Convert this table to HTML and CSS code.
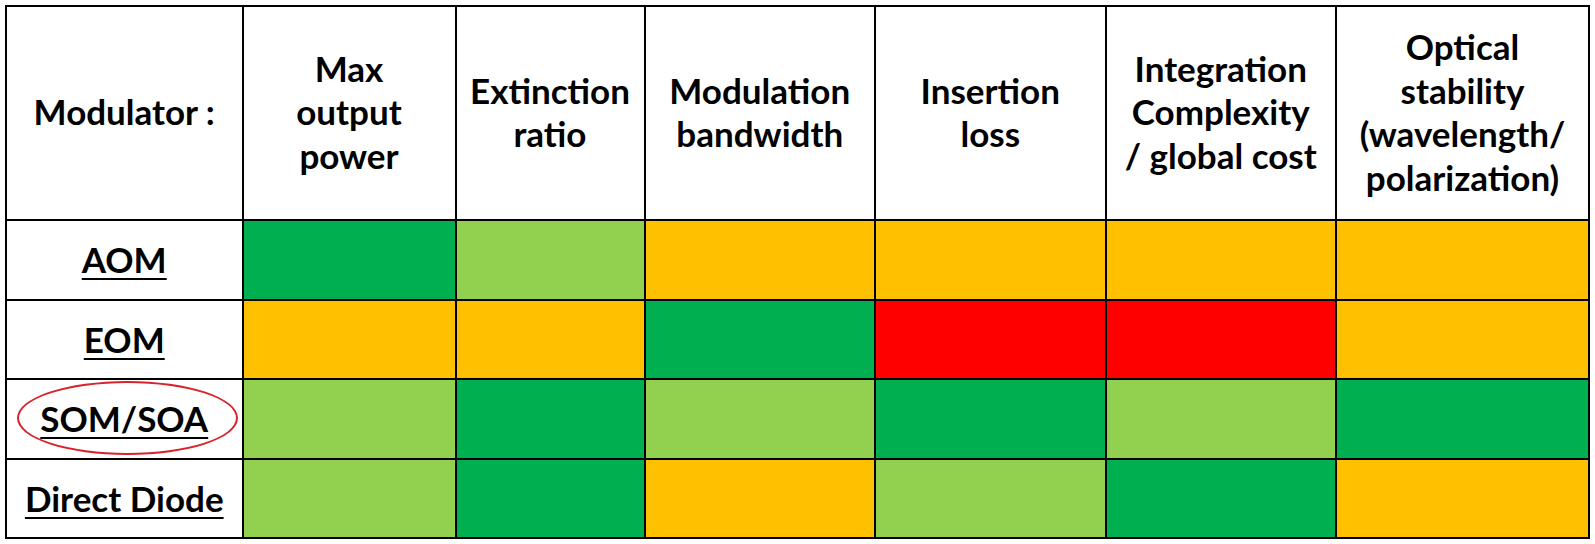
FILE: index.html
```html
<!DOCTYPE html>
<html lang="en">
<head>
<meta charset="utf-8">
<title>Modulator comparison</title>
<link rel="stylesheet" href="styles.css">
</head>
<body>
<div class="table">
  <div class="cell head first">Modulator :</div>
  <div class="cell head">Max<br>output<br>power</div>
  <div class="cell head">Extinction<br>ratio</div>
  <div class="cell head">Modulation<br>bandwidth</div>
  <div class="cell head">Insertion<br>loss</div>
  <div class="cell head">Integration<br>Complexity<br>/ global cost</div>
  <div class="cell head">Optical<br>stability<br>(wavelength/<br>polarization)</div>

  <div class="cell label"><span class="u">AOM</span></div>
  <div class="cell dg"></div>
  <div class="cell lg"></div>
  <div class="cell or"></div>
  <div class="cell or"></div>
  <div class="cell or"></div>
  <div class="cell or"></div>

  <div class="cell label"><span class="u">EOM</span></div>
  <div class="cell or"></div>
  <div class="cell or"></div>
  <div class="cell dg"></div>
  <div class="cell rd"></div>
  <div class="cell rd"></div>
  <div class="cell or"></div>

  <div class="cell label circled"><span class="u">SOM/SOA</span><span class="ring"></span></div>
  <div class="cell lg"></div>
  <div class="cell dg"></div>
  <div class="cell lg"></div>
  <div class="cell dg"></div>
  <div class="cell lg"></div>
  <div class="cell dg"></div>

  <div class="cell label"><span class="u">Direct Diode</span></div>
  <div class="cell lg"></div>
  <div class="cell dg"></div>
  <div class="cell or"></div>
  <div class="cell lg"></div>
  <div class="cell dg"></div>
  <div class="cell or"></div>
</div>
</body>
</html>
```
FILE: styles.css
```css
html, body {
  margin: 0;
  padding: 0;
  background: #ffffff;
}
body {
  padding: 5px 0 0 5px;
  font-family: Lato, "Open Sans", "Liberation Sans", sans-serif;
  font-weight: 700;
  color: #000;
}
.table {
  display: grid;
  width: 1585px;
  box-sizing: border-box;
  grid-template-columns: 234.5px 211px 187px 228.5px 228.5px 228.5px 251px;
  grid-template-rows: 212px 78px 77px 78px 77px;
  gap: 2px;
  padding: 2px;
  background: #000;
}
.cell {
  background: #fff;
  display: flex;
  align-items: center;
  justify-content: center;
  text-align: center;
  font-size: 35px;
  line-height: 43.5px;
}
.head {
  padding-bottom: 2px;
}
.label {
  position: relative;
}
.u {
  text-decoration: underline;
  text-decoration-thickness: 2px;
  text-underline-offset: 5px;
}
.ring {
  position: absolute;
  left: 10px;
  top: 1px;
  width: 217px;
  height: 70px;
  border: 2px solid #d8232a;
  border-radius: 50%;
}
.dg { background: #00b050; }
.lg { background: #92d050; }
.or { background: #ffc000; }
.rd { background: #ff0000; }
```
